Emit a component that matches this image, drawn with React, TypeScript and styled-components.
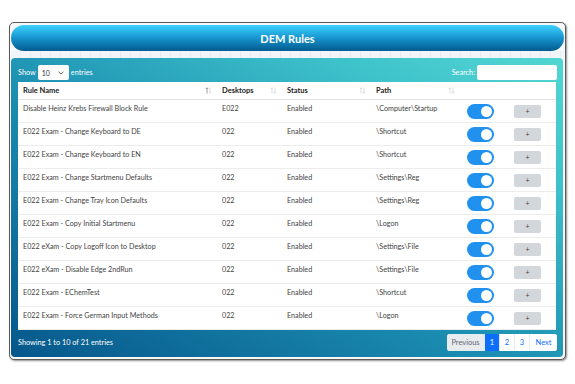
import React from "react";
import styled, { createGlobalStyle } from "styled-components";

const Global = createGlobalStyle`
  html, body { margin: 0; padding: 0; background: #ffffff; }
  body { font-family: "Lato", "Open Sans", sans-serif; }
  * { box-sizing: border-box; }
`;

const Page = styled.div`
  width: 575px;
  height: 384px;
  padding: 22px 9px 0 9px;
`;

const Frame = styled.div`
  width: 557px;
  height: 338px;
  border: 1px solid #5a5a5a;
  border-radius: 5px;
  background: #f6f8fb;
  box-shadow: 1px 1px 2px rgba(0, 0, 0, 0.45);
  padding: 2px 1px 2px 1px;
  display: flex;
  flex-direction: column;
`;

const Header = styled.div`
  height: 26px;
  border-radius: 13px;
  background: linear-gradient(to bottom, #3ed2ff 0%, #1a9ad4 45%, #005a8e 100%);
  display: flex;
  align-items: center;
  justify-content: center;
  color: #ffffff;
  font-weight: 700;
  font-size: 11px;
`;

const Stripe = styled.div`
  height: 7px;
  background: repeating-linear-gradient(
    to right,
    #f1f4f8 0px,
    #f1f4f8 9px,
    #e8edf2 9px,
    #e8edf2 10px
  );
`;

const Panel = styled.div`
  flex: 1;
  margin-right: 1px;
  border-radius: 4px;
  background: linear-gradient(to top right, #06578b 0%, #1c8fb2 45%, #3fc3cb 80%, #52d6d3 100%);
  padding: 7px 6px 6px 7px;
  display: flex;
  flex-direction: column;
`;

const TopBar = styled.div`
  height: 15px;
  margin-bottom: 2px;
  display: flex;
  align-items: center;
  justify-content: space-between;
  color: #ffffff;
  font-size: 7.3px;
`;

const Group = styled.div`
  display: flex;
  align-items: center;
  gap: 2px;
`;

const SelectBox = styled.div`
  width: 31px;
  height: 15px;
  background: #ffffff;
  border-radius: 2px;
  display: flex;
  align-items: center;
  justify-content: space-between;
  padding: 0 5px 0 4px;
  color: #333;
  font-size: 7px;
`;

const SearchInput = styled.div`
  width: 80px;
  height: 15px;
  background: #ffffff;
  border-radius: 2px;
`;

const TableWrap = styled.div`
  background: #ffffff;
  width: 538px;
`;

const Table = styled.table`
  width: 538px;
  border-collapse: collapse;
  table-layout: fixed;
  font-size: 7.2px;
`;

const Th = styled.th<{ $w: number }>`
  width: ${(p) => p.$w}px;
  height: 17px;
  padding: 0 5px;
  text-align: left;
  font-weight: 700;
  font-size: 7.5px;
  color: #222;
  border-bottom: 1px solid #e3e3e3;
  vertical-align: middle;
  white-space: nowrap;
`;

const ThInner = styled.div`
  display: flex;
  align-items: center;
  justify-content: space-between;
`;

const Td = styled.td`
  height: 23px;
  padding: 3px 5px 0 5px;
  line-height: 12px;
  color: #444;
  vertical-align: top;
  white-space: nowrap;
  border-bottom: 1px solid #ececec;
`;

const ToggleCell = styled.td`
  height: 23px;
  padding: 4px 0 0 7px;
  vertical-align: top;
  border-bottom: 1px solid #ececec;
`;

const ButtonCell = styled.td`
  height: 23px;
  padding: 5px 0 0 8px;
  vertical-align: top;
  border-bottom: 1px solid #ececec;
`;

const Toggle = styled.div`
  width: 27px;
  height: 15px;
  border-radius: 8px;
  background: #2191f0;
  position: relative;
  &::after {
    content: "";
    position: absolute;
    right: 2px;
    top: 2px;
    width: 11px;
    height: 11px;
    border-radius: 50%;
    background: #ffffff;
  }
`;

const PlusButton = styled.div`
  width: 27px;
  height: 13px;
  border-radius: 2px;
  background: #d3d6da;
  color: #444;
  font-size: 7px;
  display: flex;
  align-items: center;
  justify-content: center;
  line-height: 1;
`;

const Footer = styled.div`
  margin-top: 4px;
  height: 17px;
  display: flex;
  align-items: center;
  justify-content: space-between;
  color: #ffffff;
  font-size: 7.3px;
`;

const Pager = styled.div`
  display: flex;
  height: 17px;
  border-radius: 3px;
  overflow: hidden;
  background: #ffffff;
`;

const PageBtn = styled.div<{ $w: number; $active?: boolean; $disabled?: boolean }>`
  width: ${(p) => p.$w}px;
  height: 17px;
  display: flex;
  align-items: center;
  justify-content: center;
  font-size: 7.5px;
  border-right: 1px solid #e6e9ee;
  background: ${(p) => (p.$active ? "#0d6efd" : p.$disabled ? "#e9ecef" : "#ffffff")};
  color: ${(p) => (p.$active ? "#ffffff" : p.$disabled ? "#5f6770" : "#0d6efd")};
  &:last-child { border-right: none; }
`;

const SortIcon = ({ active }: { active?: boolean }) => (
  <svg width="7" height="7" viewBox="0 0 7 7">
    <path d="M2 6.5V0.8M0.8 2L2 0.8L3.2 2" stroke={active ? "#777" : "#cfcfcf"} strokeWidth="0.7" fill="none" />
    <path d="M5 0.5V6.2M3.8 5L5 6.2L6.2 5" stroke="#cfcfcf" strokeWidth="0.7" fill="none" />
  </svg>
);

const Chevron = () => (
  <svg width="6" height="4" viewBox="0 0 6 4">
    <path d="M0.6 0.8L3 3.1L5.4 0.8" stroke="#444" strokeWidth="0.9" fill="none" />
  </svg>
);

const rows = [
  ["Disable Heinz Krebs Firewall Block Rule", "E022", "Enabled", "\\Computer\\Startup"],
  ["E022 Exam - Change Keyboard to DE", "022", "Enabled", "\\Shortcut"],
  ["E022 Exam - Change Keyboard to EN", "022", "Enabled", "\\Shortcut"],
  ["E022 Exam - Change Startmenu Defaults", "022", "Enabled", "\\Settings\\Reg"],
  ["E022 Exam - Change Tray Icon Defaults", "022", "Enabled", "\\Settings\\Reg"],
  ["E022 Exam - Copy Initial Startmenu", "022", "Enabled", "\\Logon"],
  ["E022 eXam - Copy Logoff Icon to Desktop", "022", "Enabled", "\\Settings\\File"],
  ["E022 eXam - Disable Edge 2ndRun", "022", "Enabled", "\\Settings\\File"],
  ["E022 Exam - EChemTest", "022", "Enabled", "\\Shortcut"],
  ["E022 Exam - Force German Input Methods", "022", "Enabled", "\\Logon"],
];

export default function App() {
  return (
    <Page>
      <Global />
      <Frame>
        <Header>DEM Rules</Header>
        <Stripe />
        <Panel>
          <TopBar>
            <Group>
              <span>Show</span>
              <SelectBox>
                <span>10</span>
                <Chevron />
              </SelectBox>
              <span>entries</span>
            </Group>
            <Group>
              <span>Search:</span>
              <SearchInput />
            </Group>
          </TopBar>
          <TableWrap>
            <Table>
              <thead>
                <tr>
                  <Th $w={199}>
                    <ThInner>
                      <span>Rule Name</span>
                      <SortIcon active />
                    </ThInner>
                  </Th>
                  <Th $w={65}>
                    <ThInner>
                      <span>Desktops</span>
                      <SortIcon />
                    </ThInner>
                  </Th>
                  <Th $w={89}>
                    <ThInner>
                      <span>Status</span>
                      <SortIcon />
                    </ThInner>
                  </Th>
                  <Th $w={89}>
                    <ThInner>
                      <span>Path</span>
                      <SortIcon />
                    </ThInner>
                  </Th>
                  <Th $w={46} />
                  <Th $w={50} />
                </tr>
              </thead>
              <tbody>
                {rows.map((r, i) => (
                  <tr key={i}>
                    <Td>{r[0]}</Td>
                    <Td>{r[1]}</Td>
                    <Td>{r[2]}</Td>
                    <Td>{r[3]}</Td>
                    <ToggleCell>
                      <Toggle />
                    </ToggleCell>
                    <ButtonCell>
                      <PlusButton>+</PlusButton>
                    </ButtonCell>
                  </tr>
                ))}
              </tbody>
            </Table>
          </TableWrap>
          <Footer>
            <span>Showing 1 to 10 of 21 entries</span>
            <Pager>
              <PageBtn $w={38} $disabled>Previous</PageBtn>
              <PageBtn $w={15} $active>1</PageBtn>
              <PageBtn $w={15}>2</PageBtn>
              <PageBtn $w={15}>3</PageBtn>
              <PageBtn $w={27}>Next</PageBtn>
            </Pager>
          </Footer>
        </Panel>
      </Frame>
    </Page>
  );
}
